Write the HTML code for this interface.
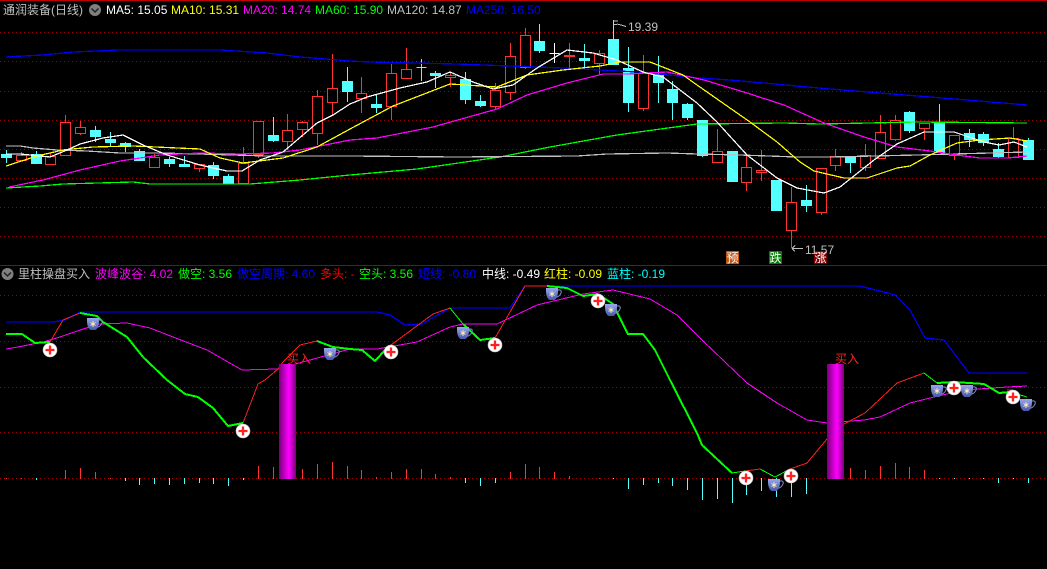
<!DOCTYPE html>
<html><head><meta charset="utf-8"><title>通润装备</title>
<style>
html,body{margin:0;padding:0;background:#000;width:1047px;height:569px;overflow:hidden}
svg{display:block}
text{font-family:"Liberation Sans","Noto Sans CJK SC",sans-serif;font-size:12px;white-space:pre}
.c{shape-rendering:crispEdges}
.l{fill:none;stroke-width:1}
.m{fill:none;stroke-width:1.250}
.g{fill:none;stroke:#0f0;stroke-width:2}
</style></head><body>
<svg width="1047" height="569" viewBox="0 0 1047 569" xmlns="http://www.w3.org/2000/svg">
<defs>
<linearGradient id="b" x1="0" x2="1" y1="0" y2="0"><stop offset="0" stop-color="#780078"/><stop offset=".58" stop-color="#ff00ff"/><stop offset="1" stop-color="#780078"/></linearGradient>
<linearGradient id="cg" x1="0" x2="0" y1="0" y2="1"><stop offset="0" stop-color="#98a8ee"/><stop offset="1" stop-color="#4656ac"/></linearGradient>
<symbol id="cup" width="17" height="13" viewBox="0 0 17 13" overflow="visible">
<path d="M11 2.500c3-1.500 5 0 4 2.500s-3 4-5.500 4.500" fill="none" stroke="#8090d0" stroke-width="1"/>
<path d="M0 0H12C12.200 6 11.500 10 8.500 12H3.500C.5 10-.2 6 0 0z" fill="url(#cg)"/>
<path d="M6 3V9M3.500 4.500L8.500 7.500M8.500 4.500L3.500 7.500" stroke="#f0e0a8" stroke-width="1"/>
<circle cx="6" cy="6" r="1.400" fill="#f4e8b8"/>
</symbol>
<symbol id="plus" width="14" height="14" viewBox="0 0 14 14" overflow="visible">
<circle cx="7" cy="7" r="7" fill="#fff" stroke="#bbb" stroke-width=".6"/>
<path d="M2.500 7H11.500M7 2.500V11.500" stroke="#ff2020" stroke-width="2.300"/>
</symbol>
</defs>

<rect width="1047" height="569" fill="#000"/>
<g class="c">
<rect x="0" y="0" width="1047" height="1" fill="#c00000"/>
<rect x="0" y="265" width="1047" height="1" fill="#a00000"/>
<g stroke="#a00000" stroke-width="1" stroke-dasharray="1 3">
<path d="M0 32.500H1047M0 61.500H1047M0 91.500H1047M0 120.500H1047M0 149.500H1047M0 178.500H1047M0 207.500H1047M0 236.500H1047M0 295.500H1047M0 341.500H1047M0 387.500H1047M0 432.500H1047M0 478.500H1047"/>
</g>

<!-- cyan candles -->
<path fill="#54ffff" stroke="#54ffff" stroke-width="1" d="M6.500 150V163M1.500 154.500h10v3h-10z
M36.500 151V164M31.500 154.500h10v9h-10z
M95.500 126V142M90.500 130.500h10v6h-10z
M110.500 132V146M105.500 139.500h10v3h-10z
M125.500 142V152M120.500 143.500h10v3h-10z
M139.500 149V161M134.500 151.500h10v9h-10z
M169.500 157V167M164.500 159.500h10v4h-10z
M184.500 156V167M179.500 164.500h10v2h-10z
M213.500 162V179M208.500 165.500h10v10h-10z
M228.500 174V183M223.500 176.500h10v7h-10z
M273.500 117V142M268.500 135.500h10v5h-10z
M347.500 67V102M342.500 81.500h10v10h-10z
M376.500 95V113M371.500 104.500h10v3h-10z
M421.500 59V81M416.500 67.500h10
M435.500 71V88M430.500 73.500h10v2h-10z
M465.500 72V104M460.500 79.500h10v20h-10z
M480.500 95V107M475.500 101.500h10v4h-10z
M539.500 24V53M534.500 41.500h10v9h-10z
M584.500 44V68M579.500 58.500h10v2h-10z
M613.500 20V65M608.500 39.500h10v25h-10z
M628.500 47V112M623.500 68.500h10v34h-10z
M658.500 56V103M653.500 74.500h10v8h-10z
M672.500 81V120M667.500 89.500h10v13h-10z
M687.500 103V120M682.500 104.500h10v13h-10z
M702.500 120V157M697.500 120.500h10v35h-10z
M732.500 151V182M727.500 151.500h10v30h-10z
M776.500 180V211M771.500 180.500h10v30h-10z
M806.500 185V212M801.500 200.500h10v5h-10z
M850.500 156V173M845.500 157.500h10v5h-10z
M909.500 111V133M904.500 112.500h10v18h-10z
M939.500 104V153M934.500 123.500h10v29h-10z
M969.500 129V147M964.500 133.500h10v6h-10z
M983.500 132V146M978.500 134.500h10v8h-10z
M998.500 143V158M993.500 149.500h10v7h-10z
M1028.500 138V160M1023.500 140.500h10v19h-10z"/>
<path stroke="#fff" stroke-width="1" fill="none" d="M554.500 43V63M549.500 53.500h10"/>

<!-- red candles -->
<path fill="#000" stroke="#ff3232" stroke-width="1" d="M21.500 152V155M21.500 160V161M16.500 155.500h10v5h-10z
M50.500 153V156M45.500 156.500h10v8h-10z
M65.500 115V122M60.500 122.500h10v33h-10z
M80.500 121V127M80.500 134V135M75.500 127.500h10v6h-10z
M154.500 154V157M149.500 157.500h10v10h-10z
M199.500 169V172M194.500 164.500h10v4h-10z
M243.500 147V163M238.500 163.500h10v20h-10z
M258.500 155V158M253.500 121.500h10v33h-10z
M287.500 114V130M287.500 142V150M282.500 130.500h10v11h-10z
M302.500 121V122M302.500 130V137M297.500 122.500h10v7h-10z
M317.500 90V96M317.500 134V145M312.500 96.500h10v37h-10z
M332.500 54V88M332.500 103V115M327.500 88.500h10v14h-10z
M361.500 77V93M361.500 99V113M356.500 93.500h10v5h-10z
M391.500 64V73M391.500 107V120M386.500 73.500h10v33h-10z
M406.500 48V69M401.500 69.500h10v9h-10z
M450.500 73V75M450.500 78V87M445.500 75.500h10v2h-10z
M495.500 83V90M495.500 107V110M490.500 90.500h10v16h-10z
M510.500 43V56M510.500 93V100M505.500 56.500h10v36h-10z
M525.500 28V35M525.500 68V69M520.500 35.500h10v32h-10z
M569.500 43V55M569.500 57V68M564.500 55.500h10v1h-10z
M599.500 50V53M599.500 64V75M594.500 53.500h10v10h-10z
M643.500 55V73M643.500 109V111M638.500 73.500h10v35h-10z
M717.500 129V151M712.500 151.500h10v11h-10z
M746.500 155V167M746.500 183V191M741.500 167.500h10v15h-10z
M761.500 150V170M761.500 173V181M756.500 170.500h10v2h-10z
M791.500 187V202M791.500 231V248M786.500 202.500h10v28h-10z
M821.500 213V215M816.500 168.500h10v44h-10z
M835.500 149V156M835.500 166V171M830.500 156.500h10v9h-10z
M865.500 144V155M865.500 168V171M860.500 155.500h10v12h-10z
M880.500 115V132M875.500 132.500h10v26h-10z
M895.500 115V120M895.500 140V141M890.500 120.500h10v19h-10z
M924.500 129V140M919.500 123.500h10v5h-10z
M954.500 156V160M949.500 135.500h10v20h-10z
M1013.500 127V138M1008.500 138.500h10v19h-10z"/>

<!-- MA lines -->
<polyline class="m" stroke="#0000ff" points="6,57 14,56.500 43,55 73,52 118,50 220,50 267,53 300,57 350,61 370,62 457,64 563,68 637,72 700,78 730,80 830,89 930,97 1027,105"/>
<polyline class="m" stroke="#00ff00" points="6,188 40,186 63,184 133,182 150,184 250,184 300,180 350,175 417,169 500,157 550,147 617,135 697,124 784,123 820,124 917,122 1027,123"/>
<polyline class="m" stroke="#c0c0c0" points="6,146 20,146 33,148 57,150 87,151 120,153 160,153 200,154 267,156 350,156 457,157 577,156 607,154 667,153 697,154 740,155 797,157 830,157 917,155 1027,152"/>
<polyline class="m" stroke="#ff00ff" points="9,187 43,180 80,170 120,161 160,155 200,153 240,154 273,153 300,150 350,140 377,138 433,127 497,109 527,95 567,83 603,74 627,74 667,72 704,80 747,93 784,105 824,123 864,137 897,147 930,151 964,156 980,158 1007,158 1027,156"/>
<polyline class="m" stroke="#ffff00" points="6,166 37,156 63,150 93,147 133,146 200,149 220,158 243,163 283,158 317,147 350,129 393,106 450,84 497,87 527,75 563,70 600,66 620,62 650,62 683,75 697,85 750,122 777,142 800,162 814,171 844,178 867,178 897,168 910,166 930,155 957,143 980,140 1010,138 1027,141"/>
<polyline class="m" stroke="#ffffff" points="6,154 20,154 50,157 67,150 80,144 103,138 123,135 143,145 167,155 200,165 227,171 242,171 260,160 283,152 317,123 333,115 350,104 367,97 400,88 427,82 450,72 473,82 493,89 513,85 537,68 567,50 593,53 617,60 643,72 663,77 697,103 717,122 747,155 777,178 797,188 824,193 840,187 874,160 897,144 924,132 954,132 984,142 999,145 1014,142 1027,147"/>

<!-- histogram -->
<path fill="none" stroke="#ff3232" d="M6.500 478V479M21.500 478V479M65.500 470V479M80.500 468V479M95.500 472V479M110.500 478V479M258.500 466V479M273.500 467V479M302.500 469V479M317.500 464V479M332.500 462V479M347.500 466V479M361.500 470V479M376.500 477V479M391.500 472V479M406.500 469V479M421.500 469V479M435.500 474V479M450.500 477V479M510.500 472V479M525.500 464V479M539.500 467V479M554.500 472V479M569.500 476V479M599.500 478V479M850.500 468V479M865.500 470V479M880.500 466V479M895.500 463V479M909.500 467V479M924.500 470V479"/>
<path fill="none" stroke="#54ffff" d="M36.500 478V480M125.500 478V481M139.500 478V485M154.500 478V484M169.500 478V485M184.500 478V484M199.500 478V483M213.500 478V484M228.500 478V486M243.500 478V480M465.500 478V483M480.500 478V486M495.500 478V483M613.500 478V479M628.500 478V489M643.500 478V485M658.500 478V483M672.500 478V486M687.500 478V490M702.500 478V500M717.500 478V499M732.500 478V503M746.500 478V495M761.500 478V491M776.500 478V497M791.500 478V497M806.500 478V494M939.500 478V479M954.500 478V479M969.500 478V479M983.500 478V479M998.500 478V483M1013.500 478V479M1028.500 478V483"/>

<!-- indicator lines -->
<polyline class="m" stroke="#0000ff" points="6,322 53,322 65,320 80,312 377,312 390,315 405,325 422,324 450,308 510,308 525,286 860,286 895,295 910,310 925,338 944,340 969,373 1027,373"/>
<polyline class="l" stroke="#ff00ff" points="6,349 18,347 43,342 60,337 83,329 100,324 127,323 150,328 173,337 207,350 242,370 277,369 310,360 350,349 377,349 417,342 450,327 463,324 497,324 537,305 583,294 613,290 650,299 677,315 702,340 747,383 777,403 807,420 827,423 864,420 880,417 910,403 934,397 964,390 1007,387 1027,386"/>
<polyline class="l" stroke="#ff2020" points="50,342 63,320 80,313"/>
<polyline class="l" stroke="#ff2020" points="243,423 258,384 265,380 278,369 283,362 300,345 317,341"/>
<polyline class="l" stroke="#ff2020" points="385,350 391,345 433,314 450,308"/>
<polyline class="l" stroke="#ff2020" points="495,338 525,286 547,286"/>
<polyline class="l" stroke="#ff2020" points="745,471 760,469"/>
<polyline class="l" stroke="#ff2020" points="790,469 807,463 827,439 844,424 865,413 897,383 924,373"/>
<polyline class="l" stroke="#ff2020" points="1007,390 1013,390"/>
<polyline class="g" points="6,334 22,334 35,343 50,342"/>
<polyline class="g" points="80,313 97,316 103,322 127,337 143,357 167,380 185,394 198,397 213,408 228,426 243,423"/>
<polyline class="g" points="317,341 333,347 350,349 362,350 375,361 385,350"/>
<polyline class="l" stroke="#00ff00" points="450,308 463,324"/>
<polyline class="g" points="463,324 480,340 495,338"/>
<polyline class="g" points="547,286 567,288 583,296 598,294"/>
<polyline class="g" points="598,294 613,304 628,334 643,334 655,350 670,380 697,433 702,445 732,473"/>
<polyline class="l" stroke="#00ff00" points="732,473 745,471"/>
<polyline class="l" stroke="#00ff00" points="760,469 775,477 790,469"/>
<polyline class="l" stroke="#00ff00" points="924,373 937,383"/>
<polyline class="g" points="937,383 954,382 984,384 999,393 1010,392"/>
<polyline class="l" stroke="#00ff00" points="1010,392 1027,397"/>

<!-- buy bars -->
<rect x="279" y="364" width="17" height="115" fill="url(#b)"/>
<rect x="827" y="364" width="17" height="115" fill="url(#b)"/>

<!-- flags -->
<path fill="none" stroke="#c0c0c0" d="M613.500 21H618M613.500 24.500H617M617 24L621 25L626 26.500"/>
<path fill="none" stroke="#c0c0c0" d="M792 248.500H803M792 248.500L795 245.500M792 248.500L795 251.500"/>
<rect x="726" y="251" width="13" height="13" fill="#c05510"/>
<rect x="769" y="251" width="13" height="13" fill="#008000"/>
<rect x="814" y="251" width="13" height="13" fill="#800000"/>
</g>

<text x="628" y="31" fill="#c0c0c0">19.39</text>
<text x="805" y="254" fill="#c0c0c0">11.57</text>
<text x="726.500" y="262" fill="#fff">预</text>
<text x="769.500" y="262" fill="#fff">跌</text>
<text x="814.500" y="262" fill="#fff">涨</text>

<text x="287" y="363" fill="#ff2020">买入</text>
<text x="835" y="363" fill="#ff2020">买入</text>

<!-- cups -->
<use href="#cup" x="87" y="318"/>
<use href="#cup" x="324" y="348"/>
<use href="#cup" x="457" y="327"/>
<use href="#cup" x="546" y="288"/>
<use href="#cup" x="605" y="304"/>
<use href="#cup" x="768" y="479"/>
<use href="#cup" x="931" y="385"/>
<use href="#cup" x="961" y="385"/>
<use href="#cup" x="1020" y="399"/>
<!-- plus -->
<use href="#plus" x="43" y="343"/>
<use href="#plus" x="236" y="424"/>
<use href="#plus" x="384" y="345"/>
<use href="#plus" x="488" y="338"/>
<use href="#plus" x="591" y="294"/>
<use href="#plus" x="739" y="471"/>
<use href="#plus" x="784" y="469"/>
<use href="#plus" x="947" y="381"/>
<use href="#plus" x="1006" y="390"/>

<!-- header 1 -->
<text x="3" y="14" fill="#c0c0c0">通润装备(日线)</text>
<circle cx="95" cy="10" r="6" fill="#808080"/>
<path d="M91.500 8.500L95 12L98.500 8.500" fill="none" stroke="#222" stroke-width="1.500"/>
<text x="106" y="14" fill="#fff">MA5: 15.05</text>
<text x="171" y="14" fill="#ffff00">MA10: 15.31</text>
<text x="243" y="14" fill="#ff00ff">MA20: 14.74</text>
<text x="315" y="14" fill="#00ff00">MA60: 15.90</text>
<text x="387" y="14" fill="#c0c0c0">MA120: 14.87</text>
<text x="466" y="14" fill="#0000ff">MA250: 16.50</text>

<!-- header 2 -->
<circle cx="7.500" cy="274" r="6" fill="#808080"/>
<path d="M4 272.500L7.500 276L11 272.500" fill="none" stroke="#222" stroke-width="1.500"/>
<text x="18" y="278" fill="#c0c0c0">里柱操盘买入</text>
<text x="95" y="278" fill="#ff00ff">波峰波谷: 4.02</text>
<text x="178" y="278" fill="#00ff00">做空: 3.56</text>
<text x="237" y="278" fill="#0000ff">做空周期: 4.60</text>
<text x="320" y="278" fill="#ff0000">多头: -</text>
<text x="359" y="278" fill="#00ff00">空头: 3.56</text>
<text x="418" y="278" fill="#0000ff">短线: -0.80</text>
<text x="482" y="278" fill="#ffffff">中线: -0.49</text>
<text x="544" y="278" fill="#ffff00">红柱: -0.09</text>
<text x="607" y="278" fill="#00ffff">蓝柱: -0.19</text>
</svg>
</body></html>
